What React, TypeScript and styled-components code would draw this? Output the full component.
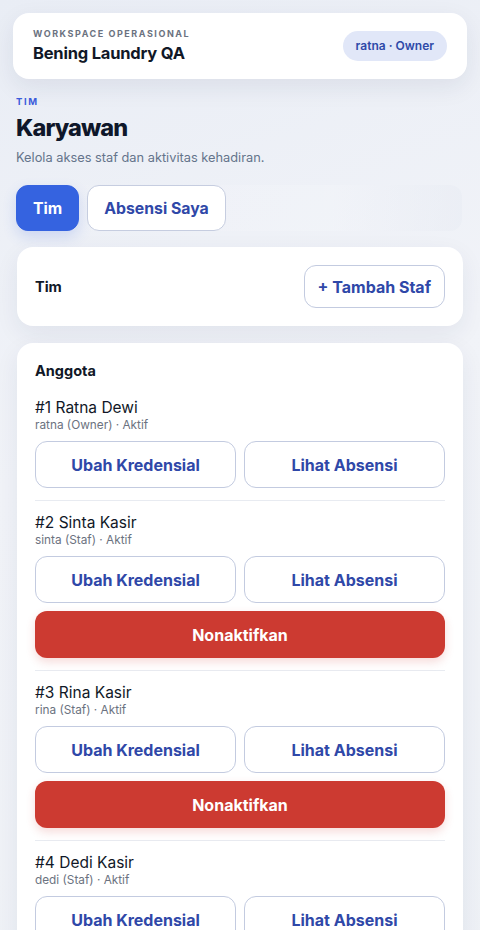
import styled, {createGlobalStyle} from "styled-components";

type Member = {
    id: number
    name: string
    username: string
    role: string
    status: string
    canDeactivate: boolean
}

const members: Member[] = [
    {id: 1, name: "Ratna Dewi", username: "ratna", role: "Owner", status: "Aktif", canDeactivate: false},
    {id: 2, name: "Sinta Kasir", username: "sinta", role: "Staf", status: "Aktif", canDeactivate: true},
    {id: 3, name: "Rina Kasir", username: "rina", role: "Staf", status: "Aktif", canDeactivate: true},
    {id: 4, name: "Dedi Kasir", username: "dedi", role: "Staf", status: "Aktif", canDeactivate: true},
]

export default function App() {
    return (
        <>
            <GlobalStyle/>
            <Page>
                <HeaderCard>
                    <div>
                        <Eyebrow>Workspace Operasional</Eyebrow>
                        <WorkspaceName>Bening Laundry QA</WorkspaceName>
                    </div>
                    <UserBadge>ratna · Owner</UserBadge>
                </HeaderCard>

                <Main>
                    <TitleBlock>
                        <SectionTag>Tim</SectionTag>
                        <PageTitle>Karyawan</PageTitle>
                        <Subtitle>Kelola akses staf dan aktivitas kehadiran.</Subtitle>
                    </TitleBlock>

                    <TabRow>
                        <TabButton $active>Tim</TabButton>
                        <TabButton>Absensi Saya</TabButton>
                    </TabRow>

                    <Card>
                        <ToolbarRow>
                            <CardTitle>Tim</CardTitle>
                            <OutlineButton $compact>+ Tambah Staf</OutlineButton>
                        </ToolbarRow>
                    </Card>

                    <Card>
                        <CardTitle>Anggota</CardTitle>
                        <MemberList>
                            {members.map(member =>
                                <MemberItem key={member.id}>
                                    <MemberName>#{member.id} {member.name}</MemberName>
                                    <MemberMeta>{member.username} ({member.role}) · {member.status}</MemberMeta>
                                    <ActionGrid>
                                        <OutlineButton>Ubah Kredensial</OutlineButton>
                                        <OutlineButton>Lihat Absensi</OutlineButton>
                                        {member.canDeactivate && <DangerButton>Nonaktifkan</DangerButton>}
                                    </ActionGrid>
                                </MemberItem>)}
                        </MemberList>
                    </Card>
                </Main>
            </Page>
        </>
    )
}

const GlobalStyle = createGlobalStyle`
  * {
    box-sizing: border-box;
  }

  body {
    margin: 0;
    font-family: Inter, "Noto Sans", sans-serif;
    background: linear-gradient(160deg, #e9edf5 0%, #f1f3f8 40%, #eef1f6 100%);
    color: #111827;
    min-height: 100vh;
  }
`

const Page = styled.div`
  padding: 13px;
`

const HeaderCard = styled.header`
  display: flex;
  justify-content: space-between;
  align-items: center;
  background: #ffffff;
  border-radius: 16px;
  padding: 15px 20px 16px 20px;
  box-shadow: 0 8px 24px rgba(30, 41, 80, 0.08);
`

const Eyebrow = styled.div`
  font-size: 9px;
  line-height: 12px;
  font-weight: 700;
  letter-spacing: 1.55px;
  text-transform: uppercase;
  color: #6b7280;
`

const WorkspaceName = styled.div`
  margin-top: 3px;
  font-size: 16.5px;
  line-height: 20px;
  font-weight: 700;
  letter-spacing: -0.2px;
  color: #111827;
`

const UserBadge = styled.span`
  display: inline-flex;
  align-items: center;
  height: 30px;
  padding: 0 13px;
  border-radius: 15px;
  background: #e1e7f8;
  color: #2f4aa8;
  font-size: 12px;
  font-weight: 600;
`

const Main = styled.main`
  padding: 0 4px 0 3px;
  display: flex;
  flex-direction: column;
`

const TitleBlock = styled.div`
  padding-top: 17px;
`

const SectionTag = styled.div`
  font-size: 9.5px;
  line-height: 12px;
  font-weight: 700;
  letter-spacing: 1.6px;
  text-transform: uppercase;
  color: #3b5bdb;
`

const PageTitle = styled.h1`
  margin: 5px 0 0 0;
  font-size: 23.5px;
  line-height: 30px;
  font-weight: 800;
  letter-spacing: -0.9px;
  color: #0f172a;
`

const Subtitle = styled.p`
  margin: 6px 0 0 0;
  font-size: 12.8px;
  line-height: 18px;
  color: #64748b;
`

const TabRow = styled.div`
  display: flex;
  gap: 8px;
  margin-top: 18px;
  margin-right: 1px;
  border-radius: 12px;
  background: linear-gradient(90deg, rgba(255, 255, 255, 0) 0%, rgba(255, 255, 255, 0.15) 70%, rgba(228, 232, 241, 0.35) 100%);
`

const TabButton = styled.button<{ $active?: boolean }>`
  height: 46px;
  padding: 0 16px;
  border-radius: 12px;
  font-family: inherit;
  font-size: 15.8px;
  font-weight: 700;
  border: 1px solid ${props => props.$active ? "#3563e0" : "#c6cde0"};
  background: ${props => props.$active ? "#3563e0" : "#ffffff"};
  color: ${props => props.$active ? "#ffffff" : "#2f48a8"};
  box-shadow: ${props => props.$active ? "0 6px 14px rgba(53, 99, 224, 0.18)" : "none"};
`

const Card = styled.section`
  background: #ffffff;
  border-radius: 16px;
  padding: 18px;
  margin: 16px 0 0 1px;
  box-shadow: 0 8px 24px rgba(30, 41, 80, 0.07);

  & + & {
    margin-top: 17px;
  }
`

const ToolbarRow = styled.div`
  display: flex;
  justify-content: space-between;
  align-items: center;
`

const CardTitle = styled.h2`
  margin: 0;
  font-size: 14.5px;
  line-height: 20px;
  font-weight: 700;
  color: #111827;
`

const MemberList = styled.div`
  margin-top: 5px;
`

const MemberItem = styled.div`
  padding: 12px 0;
  border-bottom: 1px solid #e8ebf1;
`

const MemberName = styled.div`
  font-size: 15.5px;
  line-height: 19px;
  color: #111827;
`

const MemberMeta = styled.div`
  font-size: 11.8px;
  line-height: 16px;
  color: #6b7280;
`

const ActionGrid = styled.div`
  display: grid;
  grid-template-columns: 1fr 1fr;
  gap: 8px;
  margin-top: 8px;
`

const OutlineButton = styled.button<{ $compact?: boolean }>`
  height: ${props => props.$compact ? "43px" : "47px"};
  padding: 0 13px;
  border-radius: 12px;
  border: 1px solid #c3cbe0;
  background: #ffffff;
  color: #2f48a8;
  font-family: inherit;
  font-size: 16px;
  font-weight: 700;
`

const DangerButton = styled.button`
  grid-column: 1 / -1;
  height: 47px;
  border-radius: 12px;
  border: none;
  background: #cc3a31;
  color: #ffffff;
  font-family: inherit;
  font-size: 16px;
  font-weight: 700;
  box-shadow: 0 4px 10px rgba(204, 58, 49, 0.18);
`
